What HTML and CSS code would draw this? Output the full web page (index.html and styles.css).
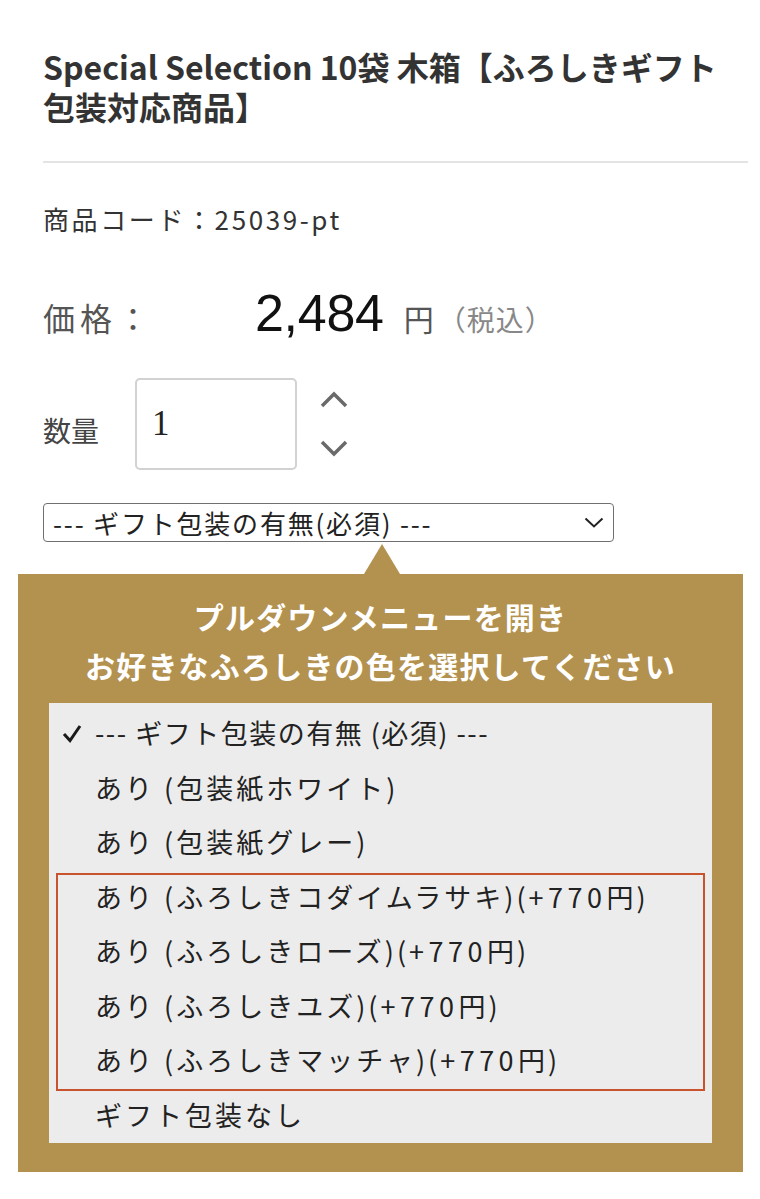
FILE: index.html
```html
<!DOCTYPE html>
<html lang="ja">
<head>
<meta charset="utf-8">
<title>Special Selection 10袋 木箱</title>
<link rel="stylesheet" href="styles.css">
</head>
<body>
<div class="product">
  <h1 class="title">Special Selection 10袋 木箱【ふろしきギフト包装対応商品】</h1>
  <hr class="divider">
  <p class="code">商品コード：25039-pt</p>
  <div class="price-row">
    <span class="price-label">価格：</span>
    <span class="price-value">2,484</span>
    <span class="price-yen">円</span>
    <span class="price-tax">（税込）</span>
  </div>
  <div class="qty-row">
    <span class="qty-label">数量</span>
    <div class="qty-input">1</div>
    <div class="qty-arrows">
      <svg width="28" height="17" viewBox="0 0 28 17"><path d="M2 15 L14 3 L26 15" fill="none" stroke="#6a6a6a" stroke-width="3.5"/></svg>
      <svg width="28" height="17" viewBox="0 0 28 17"><path d="M2 2 L14 14 L26 2" fill="none" stroke="#6a6a6a" stroke-width="3.5"/></svg>
    </div>
  </div>
  <div class="select-box">
    <span class="select-text">--- ギフト包装の有無(必須) ---</span>
    <svg class="select-chevron" width="20" height="11" viewBox="0 0 20 11"><path d="M1.5 1.5 L10 9.5 L18.5 1.5" fill="none" stroke="#222" stroke-width="2"/></svg>
  </div>
</div>
<div class="guide">
  <p class="guide-heading">プルダウンメニューを開き<br>お好きなふろしきの色を選択してください</p>
  <ul class="menu">
    <li class="menu-item checked"><svg class="check" width="20" height="19" viewBox="0 0 20 19"><path d="M2 10 L8 16.5 L18 2" fill="none" stroke="#1a1a1a" stroke-width="3"/></svg>--- ギフト包装の有無 (必須) ---</li>
    <li class="menu-item">あり (包装紙ホワイト)</li>
    <li class="menu-item">あり (包装紙グレー)</li>
    <li class="menu-group">
      <ul class="group-list">
        <li class="menu-item">あり (ふろしきコダイムラサキ)(<span class="num">+770</span>円)</li>
        <li class="menu-item">あり (ふろしきローズ)(<span class="num">+770</span>円)</li>
        <li class="menu-item">あり (ふろしきユズ)(<span class="num">+770</span>円)</li>
        <li class="menu-item">あり (ふろしきマッチャ)(<span class="num">+770</span>円)</li>
      </ul>
    </li>
    <li class="menu-item">ギフト包装なし</li>
  </ul>
</div>
</body>
</html>
```
FILE: styles.css
```css
html, body {
  margin: 0;
  padding: 0;
  background: #ffffff;
}
body {
  width: 760px;
  height: 1199px;
  overflow: hidden;
  font-family: "Noto Sans CJK JP", "Noto Sans", sans-serif;
  color: #333;
}
.product {
  padding: 46px 12px 0 43px;
}
.title {
  margin: 0;
  font-size: 32px;
  line-height: 40px;
  font-weight: 700;
  color: #333;
  letter-spacing: 0;
  padding-right: 25px;
}
.divider {
  margin: 35px 0 0 0;
  border: 0;
  height: 2px;
  background: #e4e4e4;
}
.code {
  margin: 40px 0 0 0;
  font-size: 26px;
  line-height: 32px;
  letter-spacing: 2.6px;
  color: #333;
}
.price-row {
  margin-top: 48px;
  height: 60px;
  display: flex;
  align-items: baseline;
  line-height: 60px;
}
.price-label {
  width: 212px;
  font-size: 32px;
  letter-spacing: 5px;
  color: #555;
}
.price-value {
  font-family: "Liberation Sans", Arial, sans-serif;
  font-size: 52px;
  color: #111;
  letter-spacing: -0.3px;
}
.price-yen {
  margin-left: 20px;
  font-size: 30px;
  color: #555;
}
.price-tax {
  margin-left: 4px;
  font-size: 28px;
  letter-spacing: 1px;
  color: #888;
}
.qty-row {
  margin-top: 35px;
  display: flex;
  align-items: center;
}
.qty-label {
  width: 92px;
  margin-top: 12px;
  font-size: 28px;
  color: #444;
}
.qty-input {
  box-sizing: border-box;
  width: 162px;
  height: 92px;
  border: 2px solid #d2d2d2;
  border-radius: 5px;
  padding-left: 15px;
  display: flex;
  align-items: center;
  font-family: "Liberation Serif", "Times New Roman", serif;
  font-size: 35px;
  color: #222;
}
.qty-arrows {
  margin-left: 23px;
  display: flex;
  flex-direction: column;
  gap: 32px;
}
.qty-arrows svg {
  display: block;
}
.select-box {
  box-sizing: border-box;
  margin-top: 33px;
  width: 571px;
  height: 39px;
  border: 1.5px solid #707070;
  border-radius: 4px;
  display: flex;
  align-items: center;
  justify-content: space-between;
  padding: 0 9px 0 9px;
}
.select-text {
  font-size: 26px;
  letter-spacing: 1.8px;
  color: #222;
  line-height: 36px;
  white-space: nowrap;
}
.guide {
  position: relative;
  margin: 32px 17px 0 18px;
  background: #b3914f;
  padding: 18px 0 29px;
}
.guide::before {
  content: "";
  position: absolute;
  top: -30px;
  left: 346px;
  border-left: 18px solid transparent;
  border-right: 18px solid transparent;
  border-bottom: 30px solid #b3914f;
}
.guide-heading {
  margin: 0;
  text-align: center;
  color: #ffffff;
  font-size: 30px;
  font-weight: 700;
  line-height: 49px;
  letter-spacing: 1.2px;
}
.menu {
  list-style: none;
  margin: 13px 31px 0;
  padding: 3px 0 1px;
  background: #ececec;
}
.group-list {
  list-style: none;
  margin: 0;
  padding: 0;
}
.menu-group {
  position: relative;
}
.menu-group::after {
  content: "";
  position: absolute;
  top: 3px;
  bottom: -3px;
  left: 7px;
  right: 7px;
  border: 2px solid #c9532c;
  pointer-events: none;
}
.menu-item {
  height: 54.5px;
  line-height: 54.5px;
  padding-left: 46px;
  font-size: 27px;
  letter-spacing: 3px;
  color: #222;
  white-space: nowrap;
}
.menu-item .num {
  letter-spacing: 4.5px;
}
.menu-item.checked {
  display: flex;
  align-items: center;
  padding-left: 13px;
  letter-spacing: 1.5px;
}
.check {
  margin-right: 13px;
  flex: none;
}
```
